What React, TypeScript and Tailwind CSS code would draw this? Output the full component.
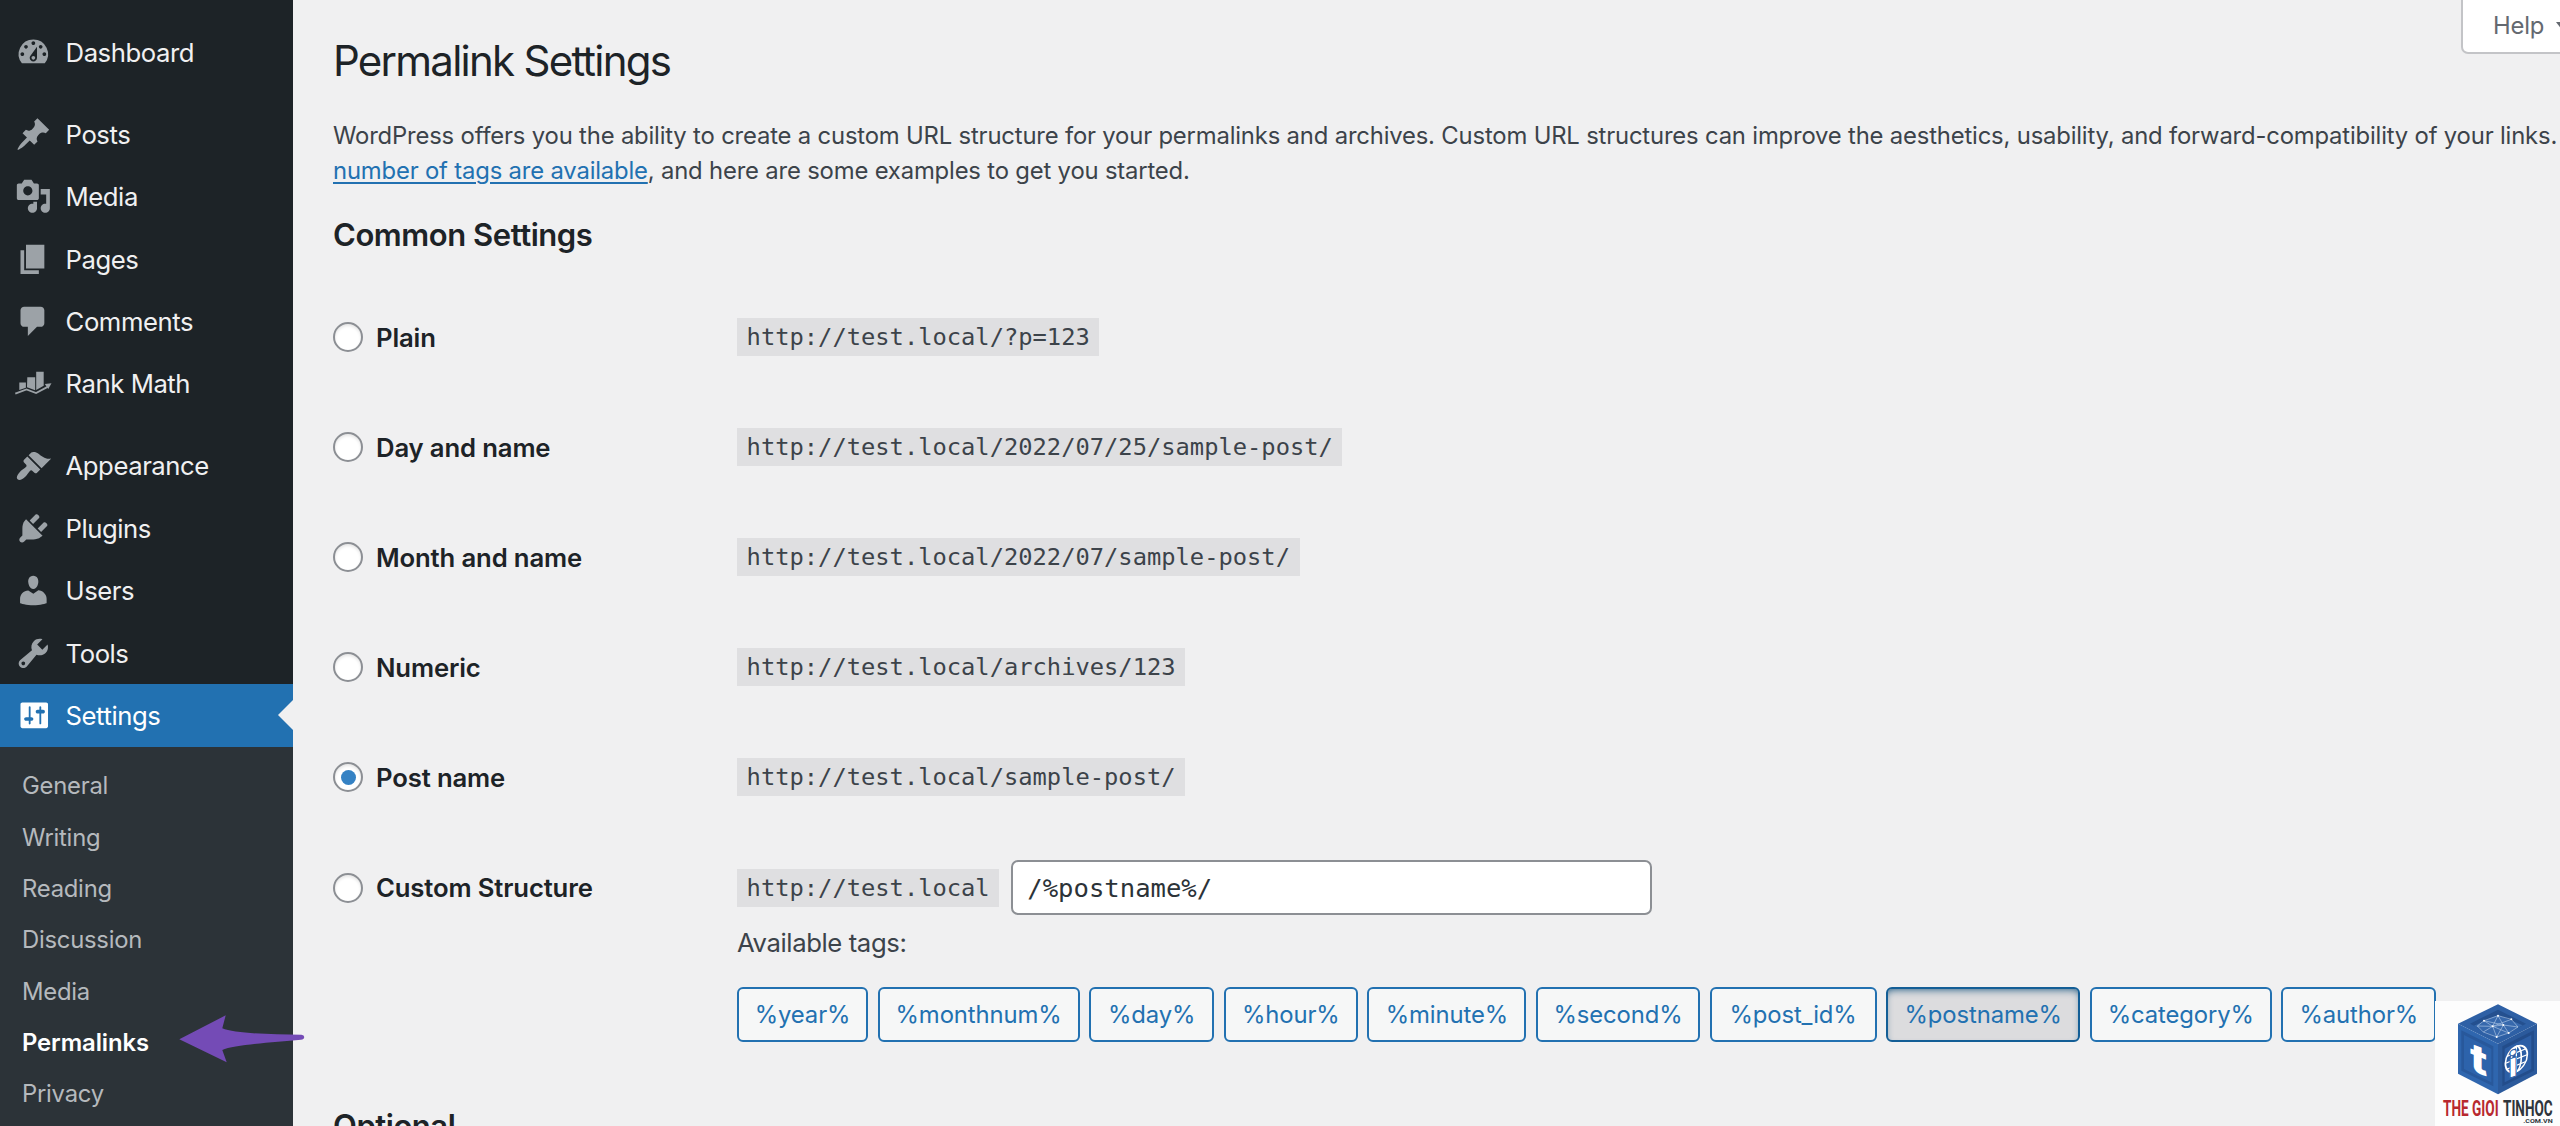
import { useState } from 'react'
import type { ReactNode } from 'react'

type MenuItem = { label: string; icon: ReactNode }

const ICON = {
  dashboard:
    'M3.76 16h12.48A7.998 7.998 0 0010 3a7.998 7.998 0 00-6.24 13zM10 4c.55 0 1 .45 1 1s-.45 1-1 1-1-.45-1-1 .45-1 1-1zM6 6c.55 0 1 .45 1 1s-.45 1-1 1-1-.45-1-1 .45-1 1-1zm8 0c.55 0 1 .45 1 1s-.45 1-1 1-1-.45-1-1 .45-1 1-1zm-5.37 5.55L12 7v6c0 1.1-.9 2-2 2s-2-.9-2-2c0-.57.24-1.08.63-1.45zM4 10c.55 0 1 .45 1 1s-.45 1-1 1-1-.45-1-1 .45-1 1-1zm12 0c.55 0 1 .45 1 1s-.45 1-1 1-1-.45-1-1 .45-1 1-1zm-5 3c0-.55-.45-1-1-1s-1 .45-1 1 .45 1 1 1 1-.45 1-1z',
  posts:
    'M10.44 3.02l1.82-1.82 6.36 6.35-1.83 1.82c-1.05-.68-2.48-.57-3.41.36l-.75.75c-.92.93-1.04 2.35-.35 3.41l-1.83 1.82-2.41-2.41-2.8 2.79c-.42.42-3.38 2.71-3.8 2.29s1.86-3.39 2.28-3.81l2.79-2.79L4.1 9.36l1.83-1.82c1.05.69 2.48.57 3.4-.36l.75-.75c.93-.92 1.05-2.35.36-3.41z',
  media:
    'M13 11V4c0-.55-.45-1-1-1h-1.67L9 1H5L3.67 3H2c-.55 0-1 .45-1 1v7c0 .55.45 1 1 1h10c.55 0 1-.45 1-1zM7 4.5c1.38 0 2.5 1.12 2.5 2.5S8.38 9.5 7 9.5 4.5 8.38 4.5 7 5.62 4.5 7 4.5zM14 6h5v10.5c0 1.38-1.12 2.5-2.5 2.5S14 17.88 14 16.5s1.12-2.5 2.5-2.5c.17 0 .34.02.5.05V9h-3V6zm-4 8.05V13h2v3.5c0 1.38-1.12 2.5-2.5 2.5S7 17.88 7 16.5 8.12 14 9.5 14c.17 0 .34.02.5.05z',
  pages: 'M6 15V2h10v13H6zm-1 1h8v2H3V5h2v11z',
  comments:
    'M5 2h9c1.1 0 2 .9 2 2v7c0 1.1-.9 2-2 2h-2l-5 5v-5H5c-1.1 0-2-.9-2-2V4c0-1.1.9-2 2-2z',
  appearance:
    'M14.48 11.06L7.41 3.99l1.5-1.5c.5-.56 2.3-.47 3.51.32 1.21.8 1.43 1.28 2.91 2.1 1.18.64 2.45 1.26 4.45.85zm-.71.71L6.7 4.7 4.93 6.47c-.39.39-.39 1.02 0 1.41l1.06 1.06c.39.39.39 1.03 0 1.42-.6.6-1.43 1.11-2.21 1.69-.35.26-.7.53-1.01.84C1.43 14.23.4 16.08 1.4 17.07c.99 1 2.84-.03 4.18-1.36.31-.31.58-.66.85-1.02.57-.78 1.08-1.61 1.69-2.21.39-.39 1.02-.39 1.41 0l1.06 1.06c.39.39 1.02.39 1.41 0z',
  plugins:
    'M13.11 4.36L9.87 7.6 8 5.73l3.24-3.24c.35-.34 1.05-.2 1.56.32.52.51.66 1.21.31 1.55zm-8 1.77l.91-1.12 9.01 9.01-1.19.84c-.71.71-2.63 1.16-3.82 1.16H6.14L4.9 17.26c-.59.59-1.54.59-2.12 0-.59-.58-.59-1.53 0-2.12l1.24-1.24v-3.88c0-1.13.4-3.19 1.09-3.89zm7.26 3.97l3.24-3.24c.34-.35 1.04-.21 1.55.31.52.51.66 1.21.31 1.55l-3.24 3.25z',
  users:
    'M10 9.25c-2.27 0-2.73-3.44-2.73-3.44C7 4.02 7.82 2 9.97 2c2.16 0 2.98 2.02 2.71 3.81 0 0-.41 3.44-2.68 3.44zm0 2.57L12.72 10c2.39 0 4.52 2.33 4.52 4.53v2.49s-3.65 1.13-7.24 1.13c-3.65 0-7.24-1.13-7.24-1.13v-2.49c0-2.25 1.94-4.48 4.47-4.48z',
  tools:
    'M16.68 9.77c-1.34 1.34-3.3 1.67-4.95.99l-5.41 6.52c-.99.99-2.59.99-3.58 0s-.99-2.59 0-3.57l6.52-5.42c-.68-1.65-.35-3.61.99-4.95 1.28-1.28 3.12-1.62 4.72-1.06l-2.89 2.89 2.82 2.82 2.86-2.87c.53 1.58.18 3.39-1.08 4.65zM3.81 16.21c.4.39 1.04.39 1.43 0 .4-.4.4-1.04 0-1.43-.39-.4-1.03-.4-1.43 0-.39.39-.39 1.03 0 1.43z',
  settings:
    'M18 16V4c0-.55-.45-1-1-1H4c-.55 0-1 .45-1 1v12c0 .55.45 1 1 1h13c.55 0 1-.45 1-1zM8 11h1c.55 0 1 .45 1 1s-.45 1-1 1H8.5v1.5c0 .28-.22.5-.5.5s-.5-.22-.5-.5V13H6c-.55 0-1-.45-1-1s.45-1 1-1h1.5V5.5c0-.28.22-.5.5-.5s.5.22.5.5V11zm5.3-2h-1c-.55 0-1-.45-1-1s.45-1 1-1h1V5.5c0-.28.22-.5.5-.5s.5.22.5.5V7h1c.55 0 1 .45 1 1s-.45 1-1 1h-1v5.5c0 .28-.22.5-.5.5s-.5-.22-.5-.5V9z',
}

function DashIcon({ d }: { d: string }) {
  return (
    <svg viewBox="0 0 20 20" className="size-[36.7px] shrink-0" fill="currentColor" fillRule="evenodd">
      <path d={d} />
    </svg>
  )
}

function RankMathIcon() {
  return (
    <svg viewBox="0 0 36.7 36.7" className="size-[36.7px] shrink-0 overflow-visible" fill="currentColor">
      <path d="M4.3 17.5h6.6v5.2l-6.6 2.4zM12.3 12.3h7.9v12.9l-8.2-3zM21.2 6.7h7.5v14.1L21.2 25z" />
      <path
        d="M.3 28.6l11.2-4.2 9.6 3.7 11.5-6.2"
        fill="none"
        stroke="currentColor"
        strokeWidth="1.8"
      />
      <path d="M29.8 18.9l6.7-.6-3.2 5.8z" />
    </svg>
  )
}

const MENU: MenuItem[][] = [
  [{ label: 'Dashboard', icon: <DashIcon d={ICON.dashboard} /> }],
  [
    { label: 'Posts', icon: <DashIcon d={ICON.posts} /> },
    { label: 'Media', icon: <DashIcon d={ICON.media} /> },
    { label: 'Pages', icon: <DashIcon d={ICON.pages} /> },
    { label: 'Comments', icon: <DashIcon d={ICON.comments} /> },
    { label: 'Rank Math', icon: <RankMathIcon /> },
  ],
  [
    { label: 'Appearance', icon: <DashIcon d={ICON.appearance} /> },
    { label: 'Plugins', icon: <DashIcon d={ICON.plugins} /> },
    { label: 'Users', icon: <DashIcon d={ICON.users} /> },
    { label: 'Tools', icon: <DashIcon d={ICON.tools} /> },
    { label: 'Settings', icon: <DashIcon d={ICON.settings} /> },
  ],
]

const SUBMENU = ['General', 'Writing', 'Reading', 'Discussion', 'Media', 'Permalinks', 'Privacy']

const STRUCTURES = [
  { label: 'Plain', url: 'http://test.local/?p=123' },
  { label: 'Day and name', url: 'http://test.local/2022/07/25/sample-post/' },
  { label: 'Month and name', url: 'http://test.local/2022/07/sample-post/' },
  { label: 'Numeric', url: 'http://test.local/archives/123' },
  { label: 'Post name', url: 'http://test.local/sample-post/' },
]

const TAGS = [
  { name: '%year%', width: 'w-[131px]' },
  { name: '%monthnum%', width: 'w-[202px]' },
  { name: '%day%', width: 'w-[125px]' },
  { name: '%hour%', width: 'w-[134px]' },
  { name: '%minute%', width: 'w-[159px]' },
  { name: '%second%', width: 'w-[164px]' },
  { name: '%post_id%', width: 'w-[167px]' },
  { name: '%postname%', width: 'w-[194px]' },
  { name: '%category%', width: 'w-[182px]' },
  { name: '%author%', width: 'w-[155px]' },
]

function Sidebar() {
  return (
    <nav className="h-full w-[293px] shrink-0 bg-[#1d2327] pt-[21px]">
      <div className="flex flex-col gap-[19.7px]">
        {MENU.map((group) => (
          <ul key={group[0].label}>
            {group.map(({ label, icon }) => {
              const current = label === 'Settings'
              return (
                <li
                  key={label}
                  className={`relative flex h-[62.4px] items-center pl-[14.7px] ${
                    current ? 'bg-[#2271b1] text-white' : 'text-[#9ca2a7]'
                  }`}
                >
                  {icon}
                  <span
                    className={`ml-[14.2px] pt-[1.5px] text-[25.7px] tracking-[-0.45px] ${current ? 'text-white' : 'text-[#f0f0f1]'}`}
                  >
                    {label}
                  </span>
                  {current && (
                    <span className="absolute top-1/2 right-0 -translate-y-1/2 border-y-[15px] border-r-[15px] border-y-transparent border-r-[#f0f0f1]" />
                  )}
                </li>
              )
            })}
          </ul>
        ))}
      </div>
      <ul className="h-[379px] bg-[#2c3338] pt-[14px]">
        {SUBMENU.map((label) => (
          <li
            key={label}
            className={`flex h-[51.3px] items-center pl-[22px] text-[23.85px] ${
              label === 'Permalinks'
                ? 'font-semibold tracking-[-0.1px] text-white'
                : 'tracking-[-0.25px] text-[#b5b9bd]'
            }`}
          >
            {label}
          </li>
        ))}
      </ul>
    </nav>
  )
}

function Radio({ label, checked, onChange }: { label: string; checked: boolean; onChange: () => void }) {
  return (
    <label className="flex h-[55px] w-[404px] shrink-0 items-center">
      <input type="radio" name="structure" checked={checked} onChange={onChange} className="sr-only" />
      <span className="flex size-[30px] items-center justify-center rounded-full border-2 border-[#8c8f94] bg-white shadow-[inset_0_2px_3px_rgba(0,0,0,0.1)]">
        {checked && <span className="size-[15px] rounded-full bg-[#3582c4]" />}
      </span>
      <span className="ml-[13px] pt-[2px] text-[25.7px] font-semibold tracking-[-0.15px] whitespace-nowrap text-[#1d2327]">
        {label}
      </span>
    </label>
  )
}

function Code({ children }: { children: ReactNode }) {
  return (
    <code className="flex h-[38px] items-center bg-[#dfdfe1] px-[9.6px] pt-[2px] font-['DejaVu_Sans_Mono',monospace] text-[23.75px] whitespace-nowrap text-[#3c434a]">
      {children}
    </code>
  )
}

function Arrow() {
  return (
    <svg viewBox="0 0 126 50" className="absolute top-[1014px] left-[179px] h-[50px] w-[126px]">
      <path
        d="M.3 25.3 46.7 1.3 43.3 14.3C55 19.5 90 20.2 122.5 20.7Q125.4 21 125.2 23.3 125 25.6 122 25.8C95 28 55 31 43.3 36L47.7 48.3Z"
        fill="#744bb6"
      />
    </svg>
  )
}

function SiteLogo() {
  return (
    <div className="absolute right-0 bottom-0 h-[125px] w-[125px] bg-[#fdfdfd]">
      <svg viewBox="105 62 375 375" className="size-full">
        <path d="M294 72 411 130 294 190 174 130Z" fill="#2e60a5" />
        <path d="M174 130 294 190V342L174 280Z" fill="#2f66ae" />
        <path d="M411 130 294 190V342L411 280Z" fill="#2b5a9c" />
        <path d="M294 88 378 130 294 173 210 130Z" fill="#24508f" />
        <path d="M294 104 368 135 294 173 222 136Z" fill="#3769ad" />
        <path d="M184 150 280 198V318L184 271Z" fill="#28589b" />
        <path d="M192 164 274 205V306L192 266Z" fill="#2d63ab" />
        <path d="M402 150 307 198V318L402 271Z" fill="#234d8b" />
        <path d="M394 164 314 205V306L394 266Z" fill="#2d5fa6" />
        <g stroke="#c9dcf2" strokeWidth="1.6" fill="none">
          <path d="M232 137 252 121 294 106 334 117 354 140 326 158 290 170 250 155ZM252 121 278 138 334 117M278 138 250 155M278 138 326 158M294 106 278 138 290 170M278 138 310 134 354 140M310 134 290 170M252 121 310 134M294 106 310 134 326 158M232 137 278 138" />
        </g>
        <g fill="#fff">
          <circle cx="252" cy="121" r="3" />
          <circle cx="294" cy="106" r="3" />
          <circle cx="334" cy="117" r="3" />
          <circle cx="278" cy="138" r="3" />
          <circle cx="310" cy="134" r="3" />
          <circle cx="326" cy="158" r="3" />
          <circle cx="290" cy="170" r="3" />
        </g>
        <g stroke="#fff" strokeWidth="5" fill="none" transform="translate(349 236) skewY(-22)">
          <ellipse rx="33" ry="38" />
          <ellipse rx="15" ry="38" />
          <path d="M0-38V38M-33 0H33M-28-19H28M-28 19H28" strokeWidth="4" />
        </g>
        <text
          transform="matrix(1 .4 0 1 210 268)"
          fontFamily="Inter, sans-serif"
          fontWeight="800"
          fontSize="118"
          textLength="52"
          lengthAdjust="spacingAndGlyphs"
          fill="#fff"
        >
          t
        </text>
        <text
          transform="matrix(1 -.35 0 1 324 295)"
          fontFamily="Inter, sans-serif"
          fontWeight="800"
          fontSize="106"
          fill="#fff"
          stroke="#2d5fa6"
          strokeWidth="3"
          textLength="30"
          lengthAdjust="spacingAndGlyphs"
        >
          i
        </text>
        <g fontFamily="Roboto, sans-serif" fontWeight="700">
          <text x="129" y="407" fontSize="65" textLength="167" lengthAdjust="spacingAndGlyphs" fill="#b8292f">
            THE GIOI
          </text>
          <text x="309" y="407" fontSize="65" textLength="149" lengthAdjust="spacingAndGlyphs" fill="#2f353b">
            TINHOC
          </text>
          <text x="370" y="429" fontSize="18" textLength="88" lengthAdjust="spacingAndGlyphs" fill="#2f353b">
            .COM.VN
          </text>
        </g>
      </svg>
    </div>
  )
}

export default function App() {
  const [selected, setSelected] = useState('Post name')
  const [custom, setCustom] = useState('/%postname%/')

  return (
    <div className="relative flex h-[1126px] w-[2560px] overflow-hidden bg-[#f0f0f1] font-['Inter',sans-serif] text-[#3c434a]">
      <Sidebar />
      <main className="relative min-w-0 flex-1 pt-[33px] pl-[40px]">
        <h1 className="h-[56px] text-[42px] leading-[56px] tracking-[-1.75px] text-[#1d2327]">
          Permalink Settings
        </h1>
        <p className="mt-[29px] text-[23.85px] leading-[35px] tracking-[-0.18px] whitespace-nowrap">
          WordPress offers you the ability to create a custom URL structure for your permalinks and
          archives. Custom URL structures can improve the aesthetics, usability, and
          forward-compatibility of your links.
          <br />
          <a className="text-[#2271b1] underline decoration-2 underline-offset-[3px]">number of tags are available</a>
          , and here are some examples to get you started.
        </p>
        <h2 className="mt-[27px] h-[40px] text-[31px] leading-[40px] font-semibold tracking-[-0.45px] text-[#1d2327]">
          Common Settings
        </h2>

        <div className="mt-[27px]">
          {STRUCTURES.map(({ label, url }) => (
            <div key={label} className="flex h-[110px] items-center">
              <Radio label={label} checked={selected === label} onChange={() => setSelected(label)} />
              <Code>{url}</Code>
            </div>
          ))}
          <div className="flex h-[274px] pt-[28px]">
            <Radio
              label="Custom Structure"
              checked={selected === 'Custom Structure'}
              onChange={() => setSelected('Custom Structure')}
            />
            <div>
              <div className="flex items-center gap-[12px]">
                <Code>http://test.local</Code>
                <input
                  value={custom}
                  onChange={(e) => setCustom(e.target.value)}
                  aria-label="Custom structure"
                  className="h-[55px] w-[641px] rounded-[7px] border-2 border-[#8c8f94] bg-white px-[14px] font-['DejaVu_Sans_Mono',monospace] text-[25.6px] text-[#2c3338]"
                />
              </div>
              <p className="mt-[10px] h-[35px] text-[25.7px] leading-[35px] tracking-[-0.4px]">
                Available tags:
              </p>
              <div className="mt-[27px] flex gap-[9.6px]">
                {TAGS.map(({ name, width }) => (
                  <button
                    key={name}
                    type="button"
                    className={`h-[55px] shrink-0 rounded-[6px] border-2 text-[23.85px] tracking-[-0.1px] ${width} ${
                      name === '%postname%'
                        ? 'border-[#135e96] bg-[#dcdcde] text-[#2271b1] shadow-[inset_0_4px_9px_-4px_#0a4b78]'
                        : 'border-[#2271b1] bg-[#f6f7f7] text-[#2271b1]'
                    }`}
                  >
                    {name}
                  </button>
                ))}
              </div>
            </div>
          </div>
        </div>

        <h2 className="h-[40px] text-[31px] leading-[40px] font-semibold tracking-[-0.45px] text-[#1d2327]">Optional</h2>

        <button
          type="button"
          className="absolute top-0 right-[-30px] flex h-[54px] w-[129px] items-center rounded-b-[7px] border-2 border-t-0 border-[#c3c4c7] bg-white pl-[30px] text-[23.85px] tracking-[-0.2px] text-[#646970]"
        >
          Help
          <span className="ml-[12px] border-x-[7px] border-t-[9px] border-x-transparent border-t-[#646970]" />
        </button>
      </main>
      <Arrow />
      <SiteLogo />
    </div>
  )
}
